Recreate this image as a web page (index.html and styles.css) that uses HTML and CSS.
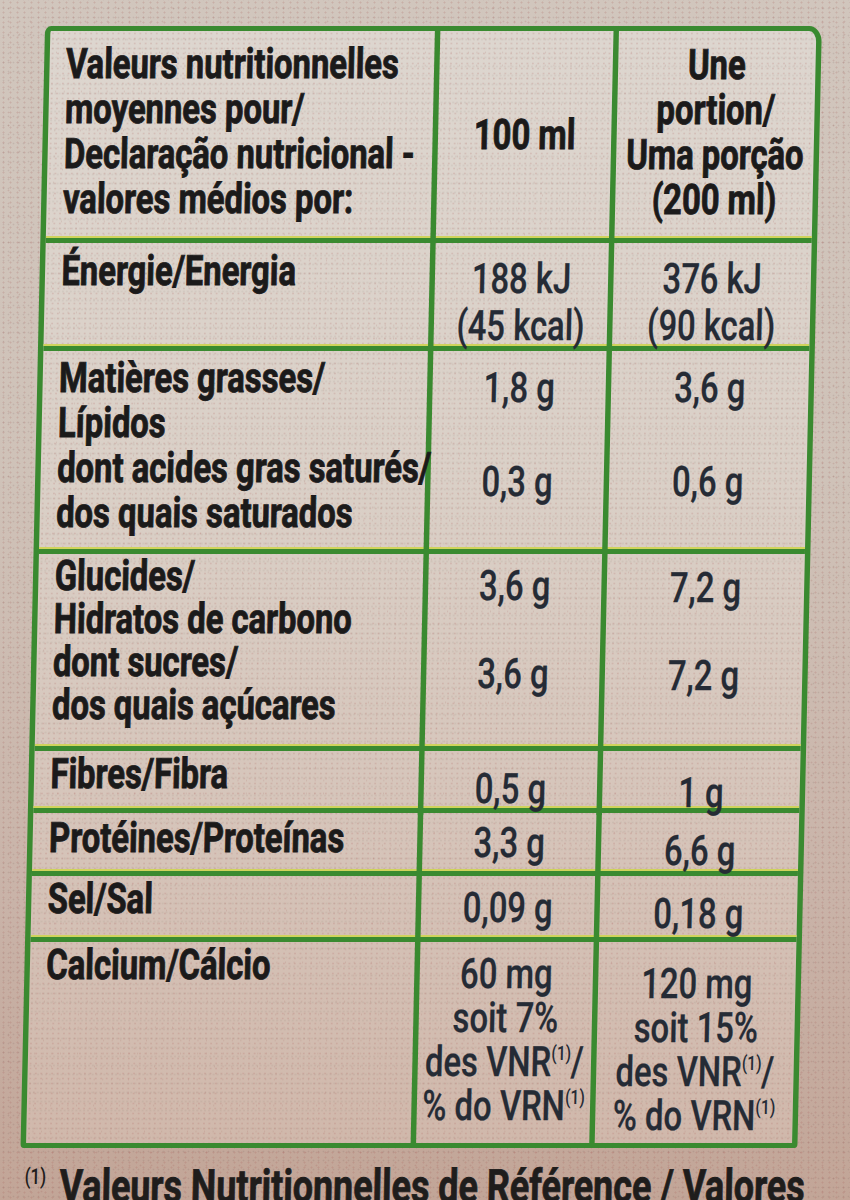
FILE: index.html
```html
<!DOCTYPE html>
<html lang="fr">
<head>
<meta charset="utf-8">
<title>Valeurs nutritionnelles</title>
<link rel="stylesheet" href="styles.css">
</head>
<body>
<div class="label">
  <div class="table">
    <div class="row r-head">
      <div class="cell c1 lab head1">Valeurs nutritionnelles<br>moyennes pour/<br>Declaração nutricional -<br>valores médios por:</div>
      <div class="cell c2 lab mid">100 ml</div>
      <div class="cell c3 lab ctr head3">Une<br>portion/<br>Uma porção<br>(200 ml)</div>
    </div>
    <div class="row r-energy">
      <div class="cell c1 lab p5">Énergie/Energia</div>
      <div class="cell c2 val lh47 p12">188 kJ<br>(45 kcal)</div>
      <div class="cell c3 val lh47 p12">376 kJ<br>(90 kcal)</div>
    </div>
    <div class="row r-fat">
      <div class="cell c1 lab p4">Matières grasses/<br>Lípidos<br>dont acides gras saturés/<br>dos quais saturados</div>
      <div class="cell c2 val lh47 p13">1,8 g<br><br>0,3 g</div>
      <div class="cell c3 val lh47 p13">3,6 g<br><br>0,6 g</div>
    </div>
    <div class="row r-carb">
      <div class="cell c1 lab lh43 p0">Glucides/<br>Hidratos de carbono<br>dont sucres/<br>dos quais açúcares</div>
      <div class="cell c2 val lh44 p10">3,6 g<br><br>3,6 g</div>
      <div class="cell c3 val lh44 p12">7,2 g<br><br>7,2 g</div>
    </div>
    <div class="row r-fibre">
      <div class="cell c1 lab p0">Fibres/Fibra</div>
      <div class="cell c2 val p15">0,5 g</div>
      <div class="cell c3 val p19">1 g</div>
    </div>
    <div class="row r-prot">
      <div class="cell c1 lab p2">Protéines/Proteínas</div>
      <div class="cell c2 val p7">3,3 g</div>
      <div class="cell c3 val p15">6,6 g</div>
    </div>
    <div class="row r-salt">
      <div class="cell c1 lab p0">Sel/Sal</div>
      <div class="cell c2 val p9">0,09 g</div>
      <div class="cell c3 val p15">0,18 g</div>
    </div>
    <div class="row r-calc">
      <div class="cell c1 lab p0">Calcium/Cálcio</div>
      <div class="cell c2 val lh44 p10">60 mg<br>soit 7%<br>des VNR<sup>(1)</sup>/<br>% do VRN<sup>(1)</sup></div>
      <div class="cell c3 val lh44 p20">120 mg<br>soit 15%<br>des VNR<sup>(1)</sup>/<br>% do VRN<sup>(1)</sup></div>
    </div>
  </div>
  <p class="note"><sup>(1)</sup> Valeurs Nutritionnelles de Référence / Valores</p>
</div>
</body>
</html>
```

FILE: styles.css
```css
html, body {
  margin: 0;
  padding: 0;
}

body {
  width: 850px;
  height: 1200px;
  overflow: hidden;
  background-color: #cbbab0;
  background-image:
    radial-gradient(circle, rgba(168, 88, 84, 0.22) 0.7px, transparent 1.3px),
    radial-gradient(circle, rgba(150, 80, 78, 0.18) 0.6px, transparent 1.2px),
    radial-gradient(circle, rgba(90, 70, 60, 0.12) 0.6px, transparent 1.2px),
    linear-gradient(180deg, #d1c6bd 0%, #cfc2b8 40%, #c9b3a8 75%, #c2a597 100%);
  background-size: 7px 5px, 11px 13px, 5px 9px, 100% 100%;
  background-position: 0 0, 3px 2px, 1px 4px, 0 0;
  font-family: Roboto, "Liberation Sans", sans-serif;
}

.label {
  width: 996px;
  margin: 26px 0 0 45px;
  transform-origin: 0 0;
  transform: skewX(-1.25deg) scaleX(0.78);
}

.table {
  box-sizing: border-box;
  width: 996px;
  border: 5px solid #3a8a30;
  border-left-width: 7px;
  border-right-width: 7px;
  border-radius: 8px 16px 4px 4px;
  background-color: #d8ccc3;
  background-image:
    radial-gradient(circle, rgba(176, 96, 92, 0.2) 0.7px, transparent 1.3px),
    radial-gradient(circle, rgba(160, 90, 86, 0.16) 0.6px, transparent 1.2px),
    radial-gradient(circle, rgba(95, 80, 70, 0.1) 0.6px, transparent 1.2px),
    linear-gradient(180deg, #ddd6cf 0%, #dad0c7 40%, #d5c3b8 75%, #d0b8ab 100%);
  background-size: 7px 5px, 11px 13px, 5px 9px, 100% 100%;
  background-position: 0 0, 3px 2px, 1px 4px, 0 0;
}

.row {
  box-sizing: border-box;
  display: grid;
  grid-template-columns: 500px 229px 253px;
  border-bottom: 5px solid #3a8a30;
  box-shadow: inset 0 -2px 0 #cfd35c;
}

.r-head { height: 212px; }
.r-energy { height: 108px; }
.r-fat { height: 203px; }
.r-carb { height: 197px; }
.r-fibre { height: 62px; }
.r-prot { height: 63px; }
.r-salt { height: 66px; }
.r-calc { height: 201px; border-bottom: 0; box-shadow: none; }

.cell {
  box-sizing: border-box;
  white-space: nowrap;
  font-size: 42px;
  line-height: 45px;
}

.c1 {
  padding-left: 21px;
  border-right: 7px solid #3a8a30;
}

.c2 {
  border-right: 7px solid #3a8a30;
  text-align: center;
}

.c3 {
  text-align: center;
}

.lab {
  font-weight: 700;
  color: #1b1a1a;
  -webkit-text-stroke: 0.9px #1b1a1a;
}

.val {
  font-weight: 500;
  color: #252b35;
  -webkit-text-stroke: 0.3px #252b35;
}

.mid {
  display: flex;
  align-items: center;
  justify-content: center;
}

.head1 { padding-top: 10px; }
.head3 { padding-top: 11px; }

.lh43 { line-height: 43px; }
.lh44 { line-height: 44px; }
.lh47 { line-height: 47px; }

.p0 { padding-top: 0; }
.p2 { padding-top: 2px; }
.p4 { padding-top: 4px; }
.p5 { padding-top: 5px; }
.p7 { padding-top: 7px; }
.p9 { padding-top: 9px; }
.p10 { padding-top: 10px; }
.p12 { padding-top: 12px; }
.p13 { padding-top: 13px; }
.p15 { padding-top: 15px; }
.p19 { padding-top: 19px; }
.p20 { padding-top: 20px; }

sup {
  font-size: 20px;
  line-height: 0;
  vertical-align: 16px;
  font-weight: 500;
  -webkit-text-stroke: 0;
}

.note {
  margin: 14px 0 0;
  padding-left: 6px;
  white-space: nowrap;
  font-size: 46px;
  line-height: 48px;
  font-weight: 700;
  color: #1f1d1c;
  -webkit-text-stroke: 0.8px #1f1d1c;
}

.note sup {
  font-size: 22px;
  vertical-align: 18px;
  margin-right: 6px;
}
```
